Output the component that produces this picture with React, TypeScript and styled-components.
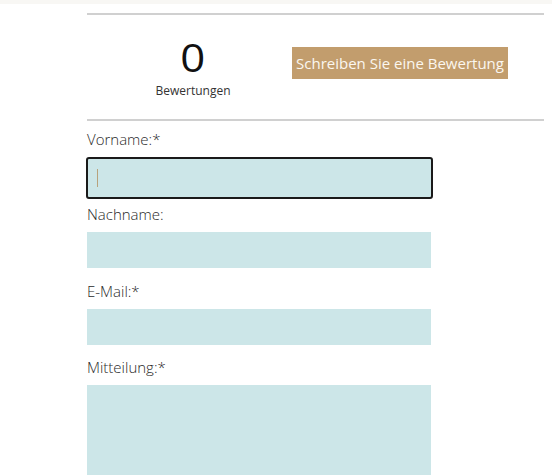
import styled, { createGlobalStyle } from "styled-components";

const GlobalStyle = createGlobalStyle`
  body {
    margin: 0;
    background: #ffffff;
    font-family: "Open Sans", "Liberation Sans", sans-serif;
    color: #333333;
  }
`;

const TopStrip = styled.div`
  height: 4px;
  background-color: #f8f7f4;
`;

const Content = styled.main`
  width: 457px;
  margin-left: 87px;
  padding-top: 9px;
`;

const Rule = styled.hr`
  margin: 0;
  border: none;
  border-top: 2px solid #d0d0d0;
`;

const Stats = styled.section`
  height: 104px;
  display: flex;
  align-items: flex-start;
`;

const StatBlock = styled.div`
  flex: 0 0 198px;
  padding-left: 7px;
  padding-top: 16px;
  display: flex;
  flex-direction: column;
  align-items: center;
`;

const Count = styled.div`
  font-size: 38px;
  font-weight: 400;
  line-height: 52px;
  color: #111111;
  transform: scaleX(1.15);
`;

const CountLabel = styled.div`
  font-size: 12px;
  line-height: 16px;
  color: #333333;
`;

const ReviewButton = styled.button`
  margin-top: 32px;
  height: 32px;
  width: 216px;
  padding: 0;
  border: none;
  background-color: #c29d6d;
  color: #fbf7f0;
  font-family: inherit;
  font-size: 15px;
  font-weight: 400;
  white-space: nowrap;
  cursor: pointer;
`;

const Form = styled.form`
  display: flex;
  flex-direction: column;
  width: 344px;
  padding-top: 8px;
`;

const Label = styled.label<{ $gap: number }>`
  display: block;
  font-size: 15px;
  font-weight: 300;
  line-height: 20px;
  color: #2a2a2a;
  margin-top: ${(p) => p.$gap}px;
  margin-bottom: 8px;
`;

const Input = styled.input`
  box-sizing: border-box;
  display: block;
  height: 36px;
  width: 344px;
  border: none;
  background-color: #cce6e8;
  padding: 0 10px;
  font-family: inherit;
  font-size: 15px;
  outline: none;
`;

const Caret = styled.span`
  display: block;
  width: 1px;
  height: 18px;
  background: #b8a27c;
`;

const FocusedBox = styled.div`
  box-sizing: border-box;
  height: 42px;
  width: 347px;
  margin-left: -1px;
  border: 2px solid #1a1a1a;
  border-radius: 3px;
  background-color: #cce6e8;
  display: flex;
  align-items: center;
  padding-left: 9px;
`;

const TextArea = styled.textarea`
  box-sizing: border-box;
  display: block;
  height: 100px;
  width: 344px;
  border: none;
  background-color: #cce6e8;
  resize: none;
  font-family: inherit;
  outline: none;
`;

export default function App() {
  return (
    <>
      <GlobalStyle />
      <TopStrip />
      <Content>
        <Rule />
        <Stats>
          <StatBlock>
            <Count>0</Count>
            <CountLabel>Bewertungen</CountLabel>
          </StatBlock>
          <ReviewButton type="button">Schreiben Sie eine Bewertung</ReviewButton>
        </Stats>
        <Rule />
        <Form>
          <Label $gap={0}>Vorname:*</Label>
          <FocusedBox>
            <Caret />
          </FocusedBox>
          <Label $gap={5}>Nachname:</Label>
          <Input />
          <Label $gap={13}>E-Mail:*</Label>
          <Input type="email" />
          <Label $gap={12}>Mitteilung:*</Label>
          <TextArea />
        </Form>
      </Content>
    </>
  );
}
